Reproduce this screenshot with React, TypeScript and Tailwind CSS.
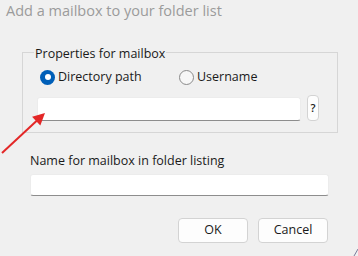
import React from 'react';

const font = { fontFamily: '"Open Sans", "Noto Sans", sans-serif' };

// Win11-style radio dot
function Radio({ checked, label }: { checked?: boolean; label: string }) {
  return (
    <label className="flex items-center gap-[3px]">
      {checked ? (
        <span className="flex h-[15px] w-[15px] items-center justify-center rounded-full bg-[#005fb8]">
          <span className="h-[6px] w-[6px] rounded-full bg-white" />
        </span>
      ) : (
        <span className="h-[15px] w-[15px] rounded-full border border-[#8a8a8a] bg-[#f7f7f7]" />
      )}
      <span className="text-[12.5px] leading-[16px] text-[#1a1a1a]">{label}</span>
    </label>
  );
}

function TextBox({ className }: { className: string }) {
  return (
    <div
      className={
        'rounded-[3px] border border-[#ececec] border-b-[#8d8d8d] bg-white ' + className
      }
    />
  );
}

function DialogButton({ children }: { children: React.ReactNode }) {
  return (
    <button className="flex h-[25px] w-[70px] items-center justify-center rounded-[4px] border border-[#d3d3d3] bg-[#fdfdfd] text-[12.5px] text-[#1a1a1a]">
      {children}
    </button>
  );
}

export default function App() {
  return (
    <div className="relative h-[256px] w-[358px] overflow-hidden bg-[#f0f0f0]" style={font}>
      {/* Title */}
      <div className="pl-[6px] pt-[1px] text-[14.5px] leading-[20px] text-[#9b9b9b]">
        Add a mailbox to your folder list
      </div>

      {/* Group box */}
      <fieldset className="ml-[22px] mt-[22px] w-[316px] border border-[#d6d6d6] pb-[11px]">
        <legend className="ml-[11px] px-[1px] pt-[3px] text-[12.5px] leading-[16px] text-[#1a1a1a]">
          Properties for mailbox
        </legend>
        <div className="ml-[17px] mt-[7px] flex items-center">
          <div className="w-[139px]">
            <Radio checked label="Directory path" />
          </div>
          <Radio label="Username" />
        </div>
        <div className="ml-[14px] mt-[10px] flex items-end gap-[6px]">
          <TextBox className="h-[24px] w-[264px]" />
          <button className="flex h-[26px] w-[12px] items-center justify-center rounded-[4px] border border-[#d3d3d3] bg-[#fdfdfd] text-[11px] font-semibold text-[#1a1a1a]">
            ?
          </button>
        </div>
      </fieldset>

      {/* Folder name */}
      <div className="ml-[30px] mt-[20px] text-[12.5px] leading-[16px] text-[#1a1a1a]">
        Name for mailbox in folder listing
      </div>
      <TextBox className="ml-[30px] mt-[5px] h-[22px] w-[299px]" />

      <div className="mt-[22px] flex justify-end gap-[10px] pr-[30px]">
        <DialogButton>OK</DialogButton>
        <DialogButton>Cancel</DialogButton>
      </div>

      {/* Red annotation arrow */}
      <svg className="absolute left-0 top-[100px]" width="50" height="60" viewBox="0 0 50 60">
        <line x1="2" y1="53" x2="37" y2="20.5" stroke="#e32727" strokeWidth="2" />
        <polygon points="45,13 40.3,25.6 32.1,16.8" fill="#e32727" />
      </svg>

      {/* Resize grip */}
      <svg className="absolute bottom-0 right-0" width="6" height="8" viewBox="0 0 6 8">
        <line x1="2" y1="8" x2="6" y2="1" stroke="#7a7a9a" strokeWidth="1" />
      </svg>
    </div>
  );
}
